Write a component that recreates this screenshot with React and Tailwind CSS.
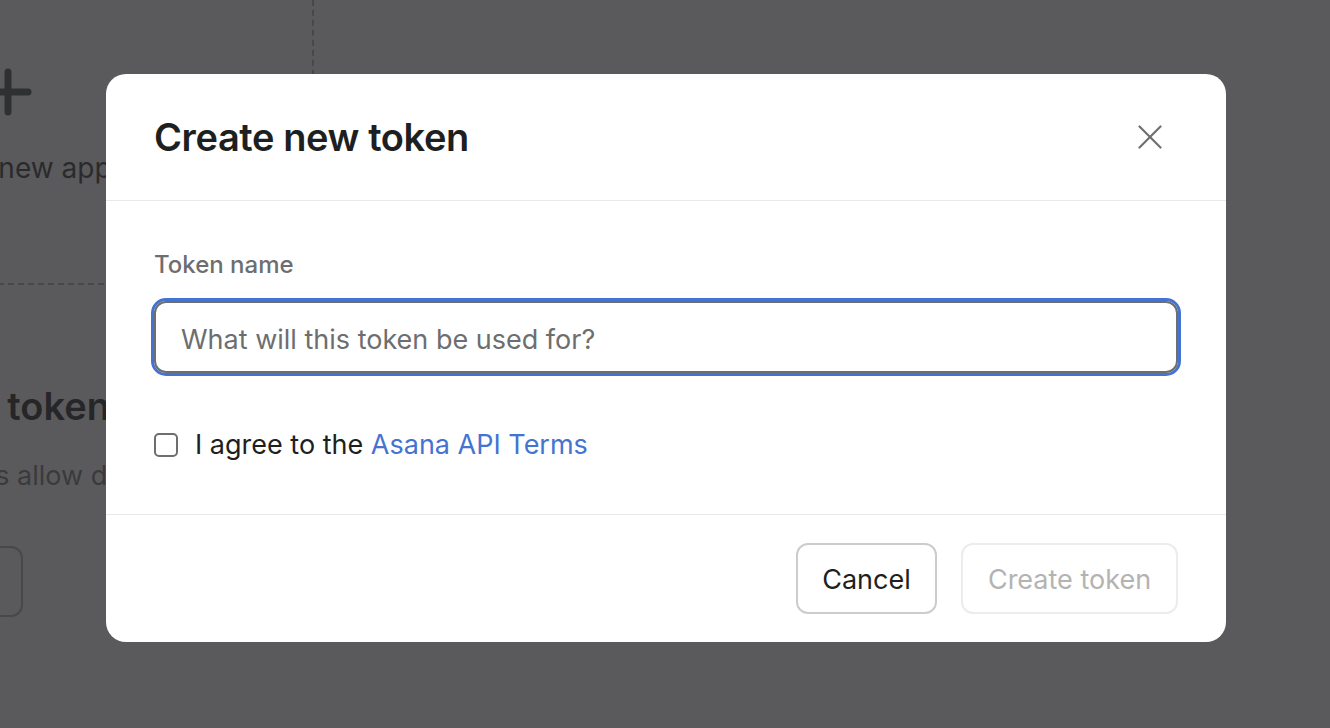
import React from "react";

function CloseIcon() {
  return (
    <svg width="24" height="24" viewBox="0 0 24 24" fill="none" stroke="#6d6e6f" strokeWidth="2.2" strokeLinecap="round">
      <path d="M1.5 1.5 L22.5 22.5" />
      <path d="M22.5 1.5 L1.5 22.5" />
    </svg>
  );
}

function PlusIcon() {
  return (
    <svg width="48" height="48" viewBox="0 0 48 48" fill="none" stroke="#2f3032" strokeWidth="7" strokeLinecap="round">
      <path d="M24 4 V44" />
      <path d="M4 24 H44" />
    </svg>
  );
}

export default function App() {
  return (
    <div
      className="relative w-[1330px] h-[728px] overflow-hidden bg-[#5a5a5c]"
      style={{ fontFamily: "Inter, 'Noto Sans', sans-serif" }}
    >
      {/* underlying page (dimmed) */}
      <div className="flex flex-col -ml-[292px] w-[620px]">
        <div className="-mt-[40px] h-[325px] w-[606px] border-2 border-dashed border-[#48484a] flex flex-col items-center pt-[106px]">
          <div className="-ml-[6px]">
            <PlusIcon />
          </div>
          <div className="mt-[33px] -ml-[8px] text-[28px] leading-[38px] text-[#2a2a2c] whitespace-nowrap">Create new app</div>
        </div>
        <div className="mt-[100px] -ml-[11px] text-[38px] leading-[43px] font-semibold text-[#262628] whitespace-nowrap">
          Personal access tokens
        </div>
        <div className="mt-[30px] text-[27px] leading-[36px] text-[#3a3a3c] whitespace-nowrap">
          Personal access tokens allow developers to access the API
        </div>
        <div className="mt-[52px] h-[71px] w-[315px] rounded-[12px] border-2 border-[#48484a]" />
      </div>

      {/* overlay + modal */}
      <div className="absolute inset-0 flex justify-center pt-[74px] pl-[2px]">
        <div className="w-[1120px] h-[568px] bg-white rounded-[20px] flex flex-col">
          <div className="h-[127px] flex items-center justify-between pl-[48px] pr-[64px] border-b border-[#e8e8e8]">
            <div className="text-[38px] font-semibold text-[#1e1f21] tracking-[-0.4px] mt-[1px]">Create new token</div>
            <CloseIcon />
          </div>
          <div className="flex-1 flex flex-col px-[48px] pt-[47px] border-b border-[#e8e8e8]">
            <div className="text-[24px] leading-[33px] font-medium text-[#6d6e6f]">Token name</div>
            <input
              className="mt-[20px] h-[72px] w-full rounded-[12px] border-2 border-[#6d6e6f] shadow-[0_0_0_3px_#4573d2] px-[25px] pt-[4px] text-[27px] text-[#1e1f21] placeholder:text-[#6d6e6f] outline-none"
              placeholder="What will this token be used for?"
            />
            <div className="mt-[54px] flex items-center gap-[17px] h-[36px]">
              <div className="w-[24px] h-[24px] rounded-[5px] border-2 border-[#6d6e6f]" />
              <div className="text-[27px] text-[#1e1f21] whitespace-nowrap">
                I agree to the <span className="text-[#4573d2]">Asana API Terms</span>
              </div>
            </div>
          </div>
          <div className="h-[127px] flex items-center justify-end gap-[24px] pr-[48px]">
            <button className="h-[71px] w-[141px] rounded-[12px] border-2 border-[#cfcbcb] pt-[4px] text-[27px] text-[#1e1f21]">
              Cancel
            </button>
            <button className="h-[71px] w-[217px] rounded-[12px] border-2 border-[#ececec] pt-[4px] text-[27px] text-[#b3b3b3]">
              Create token
            </button>
          </div>
        </div>
      </div>
    </div>
  );
}
